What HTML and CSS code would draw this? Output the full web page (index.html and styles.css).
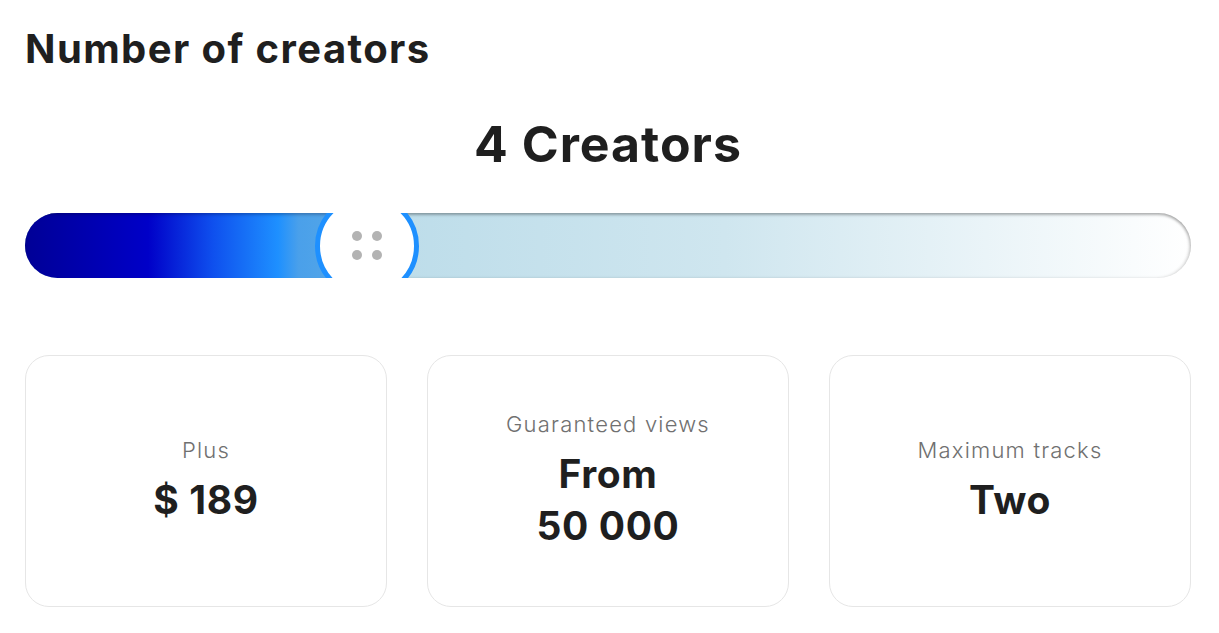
FILE: index.html
```html
<!DOCTYPE html>
<html>

<head>
    <meta name="viewport" content="width=device-width, minimum-scale=1">

    <title>Creators</title>
    <link rel="stylesheet" href="styles.css">
</head>

<body>
    <section class="creators">
        <h2 class="creators-title">Number of creators</h2>

        <div class="creators-count" id="count">4 Creators</div>

        <!-- custom range: filled part + round handle, clipped by the track -->
        <div class="range" role="slider" aria-valuemin="1" aria-valuemax="10" aria-valuenow="4" tabindex="0">
            <div class="range-fill" style="width: 342px"></div>
            <div class="range-thumb" style="left: 342px">
                <span class="grip">
                    <i></i><i></i><i></i><i></i>
                </span>
            </div>
        </div>

        <div class="plan">
            <div class="plan-card">
                <p class="plan-label">Plus</p>
                <p class="plan-value">$ 189</p>
            </div>
            <div class="plan-card">
                <p class="plan-label">Guaranteed views</p>
                <p class="plan-value">From<br>50 000</p>
            </div>
            <div class="plan-card">
                <p class="plan-label">Maximum tracks</p>
                <p class="plan-value">Two</p>
            </div>
        </div>
    </section>
</body>

</html>
```

FILE: styles.css
```css
:root {
    --text: #1f1f1f;
    --muted: #707070;
    --border: #e6e6e6;
    --accent: #1e90ff;
}

* {
    box-sizing: border-box;
    padding: 0;
    margin: 0;
}

body {
    background: #fff;
    color: var(--text);
    font-family: Inter, "Noto Sans", sans-serif;
}

.creators {
    padding: 24px 28px 0 25px;
}

.creators-title {
    font-size: 40px;
    font-weight: 700;
    line-height: 50px;
    letter-spacing: 1.4px;
}

.creators-count {
    margin-top: 40px;
    text-align: center;
    font-size: 50px;
    font-weight: 700;
    line-height: 60px;
    letter-spacing: 1px;
}

.range {
    position: relative;
    margin-top: 39px;
    height: 65px;
    border-radius: 33px;
    overflow: hidden;
    background: linear-gradient(90deg, #a9d3e4 0%, #cfe6ef 60%, #ffffff 100%);
    box-shadow: inset 0 2px 3px rgba(0, 0, 0, 0.28), inset -2px 0 3px rgba(0, 0, 0, 0.12);
}

.range-fill {
    height: 100%;
    background: linear-gradient(90deg, #000096 0%, #0000c8 36%, #0f50ee 55%, #1e90ff 74%, #4aa0ea 80%, #5aaae6 100%);
    box-shadow: inset 0 2px 3px rgba(0, 0, 40, 0.25);
}

.range-thumb {
    position: absolute;
    top: 50%;
    width: 104px;
    height: 104px;
    margin: -52px 0 0 -52px;
    border-radius: 50%;
    background: #fff;
    border: 5px solid var(--accent);
    display: flex;
    align-items: center;
    justify-content: center;
}

.grip {
    display: grid;
    grid-template-columns: 10px 10px;
    gap: 9px 10px;
}

.grip i {
    width: 10px;
    height: 10px;
    border-radius: 50%;
    background: #b3b3b3;
}

.plan {
    display: grid;
    grid-template-columns: repeat(3, 1fr);
    gap: 40px;
    margin-top: 77px;
}

.plan-card {
    height: 252px;
    border: 1px solid var(--border);
    border-radius: 24px;
    display: flex;
    flex-direction: column;
    align-items: center;
    justify-content: center;
    text-align: center;
}

.plan-label {
    font-size: 22px;
    font-weight: 300;
    color: var(--muted);
    line-height: 28px;
    letter-spacing: 1.2px;
}

.plan-value {
    margin-top: 10px;
    font-size: 39px;
    font-weight: 700;
    line-height: 52px;
    letter-spacing: 0.6px;
}
```
